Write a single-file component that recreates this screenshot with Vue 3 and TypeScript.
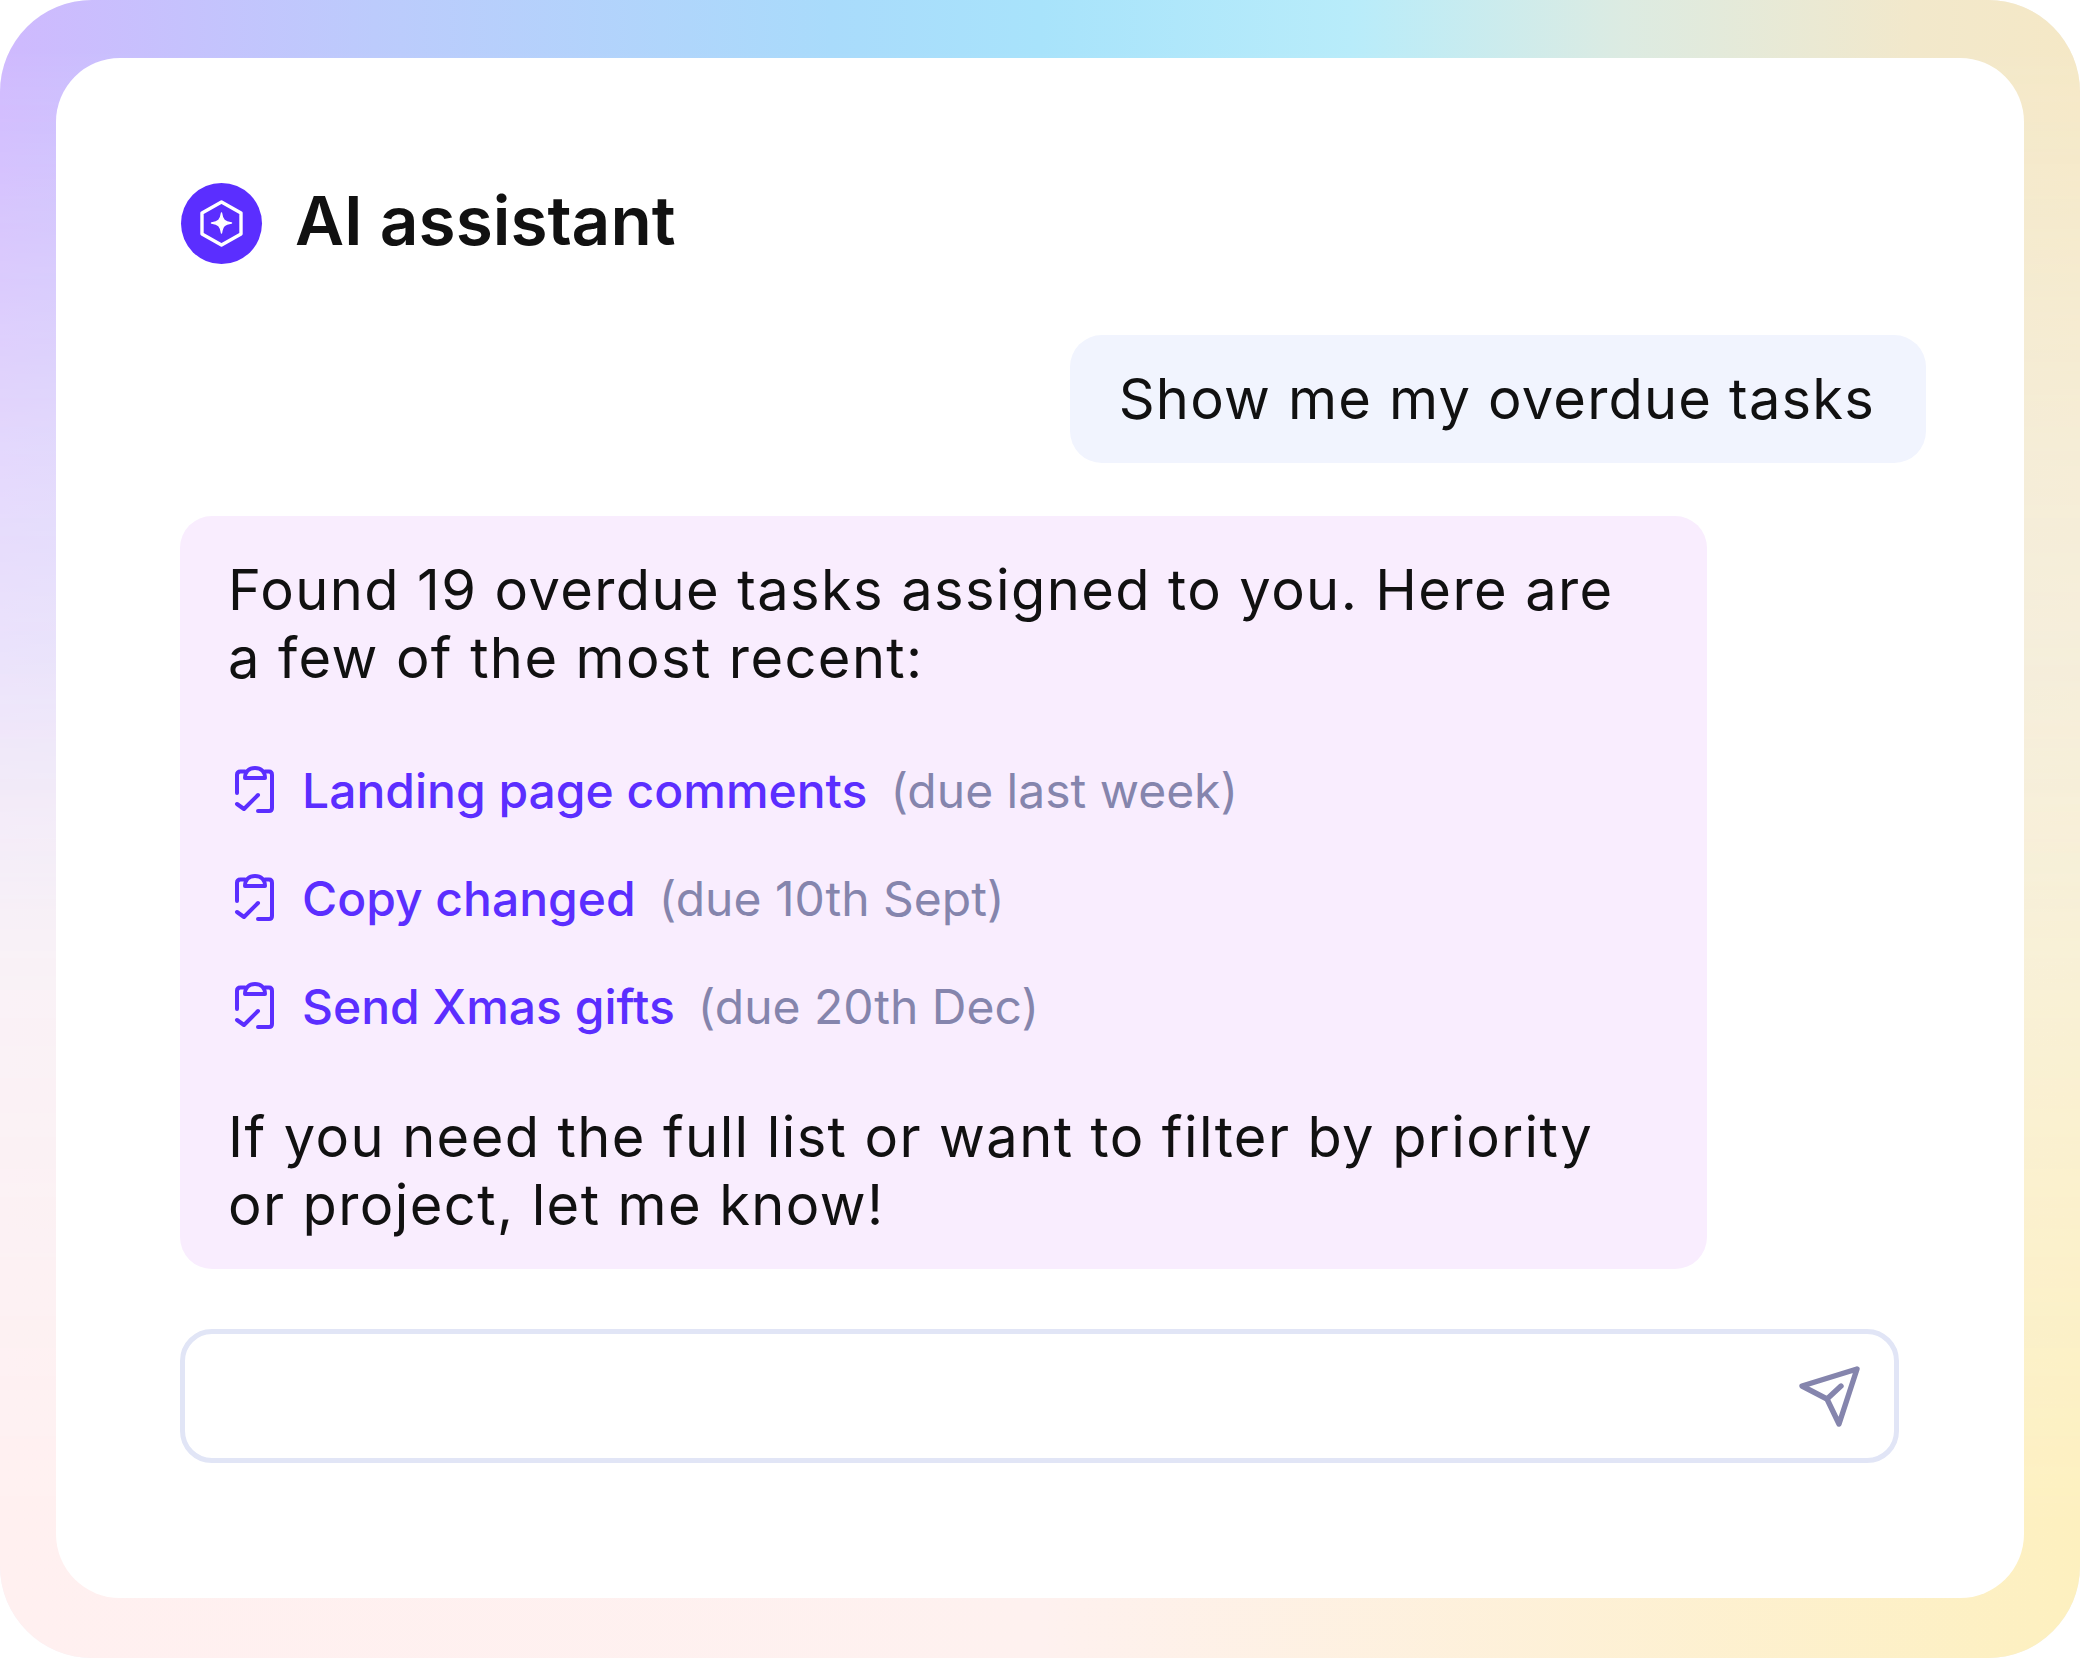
<template>
  <div class="frame">
    <div class="card">
      <header class="head">
        <span class="logo">
          <svg width="81" height="81" viewBox="0 0 81 81" fill="none">
            <path d="M40.5 19 L60 30 V51 L40.5 62 L21 51 V30 Z" stroke="#fff" stroke-width="3.4" stroke-linejoin="round" />
            <path d="M40.5 30 C41.5 37 43.5 39 50.5 40 C43.5 41 41.5 43 40.5 50 C39.5 43 37.5 41 30.5 40 C37.5 39 39.5 37 40.5 30 Z" fill="#fff" stroke="#fff" stroke-width="1.4" stroke-linejoin="round" />
          </svg>
        </span>
        <h1 class="title">AI assistant</h1>
      </header>

      <div class="user-row">
        <div class="user-bubble">Show me my overdue tasks</div>
      </div>

      <div class="reply">
        <p class="para">Found 19 overdue tasks assigned to you. Here are a few of the most recent:</p>
        <ul class="tasks">
          <li v-for="task in tasks" :key="task.name" class="task">
            <svg class="clip" width="46" height="50" viewBox="0 0 46 50" fill="none" stroke="#5b2eff" stroke-width="4" stroke-linecap="round" stroke-linejoin="round">
              <path d="M3 27 V9 Q3 5.5 6.5 5.5 H11 M31 5.5 H35 Q38 5.5 38 9 V42 Q38 45 35 45 H24" />
              <path d="M11 12 H31 C31 6 27 2 21 2 C15 2 11 6 11 12 Z" />
              <path d="M3 38 L10 43 L24 29" />
            </svg>
            <span class="task-name">{{ task.name }}</span>
            <span class="task-due">{{ task.due }}</span>
          </li>
        </ul>
        <p class="para">If you need the full list or want to filter by priority or project, let me know!</p>
      </div>

      <div class="composer">
        <svg width="64" height="64" viewBox="0 0 64 64" fill="none" stroke="#8585ad" stroke-width="5.4" stroke-linecap="round" stroke-linejoin="round">
          <path d="M59 5 L4 22 L29 35 L41 60 Z" />
          <path d="M29 35 L43 22" />
        </svg>
      </div>
    </div>
  </div>
</template>

<script setup lang="ts">
interface Task {
  name: string
  due: string
}

const tasks: Task[] = [
  { name: 'Landing page comments', due: '(due last week)' },
  { name: 'Copy changed', due: '(due 10th Sept)' },
  { name: 'Send Xmas gifts', due: '(due 20th Dec)' },
]
</script>

<style>
html,
body {
  background: #fff;
}
</style>

<style scoped>
.frame {
  position: relative;
  width: 2080px;
  height: 1658px;
  box-sizing: border-box;
  padding: 58px 56px 60px;
  border-radius: 92px;
  overflow: hidden;
  font-family: Inter, "Liberation Sans", sans-serif;
  background: linear-gradient(90deg, #f6f3fb 0%, #f6f3ee 50%, #f6f1e4 100%);
}

/* cool colours fading down from the top edge */
.frame::before {
  content: "";
  position: absolute;
  inset: 0;
  background: linear-gradient(90deg, #cfb9fe 0%, #bccbfc 18%, #a9dbfb 40%, #a8e3fb 50%, #b8ecfa 65%, #dcebe2 78%, #f2e8cb 92%, #f5e8c6 100%);
  -webkit-mask-image: linear-gradient(180deg, #000 0%, #000 3%, rgba(0, 0, 0, 0.45) 28%, transparent 58%);
  mask-image: linear-gradient(180deg, #000 0%, #000 3%, rgba(0, 0, 0, 0.45) 28%, transparent 58%);
}

/* warm colours fading up from the bottom edge */
.frame::after {
  content: "";
  position: absolute;
  inset: 0;
  background: linear-gradient(90deg, #fff0f0 0%, #fef1ef 50%, #fdf0bf 100%);
  -webkit-mask-image: linear-gradient(0deg, #000 0%, #000 8%, transparent 62%);
  mask-image: linear-gradient(0deg, #000 0%, #000 8%, transparent 62%);
}

.card {
  position: relative;
  z-index: 1;
  height: 100%;
  box-sizing: border-box;
  padding: 125px 98px 0 124px;
  background: #fff;
  border-radius: 64px;
}

.head {
  display: flex;
  align-items: flex-start;
  gap: 33px;
  height: 81px;
}

.logo {
  display: flex;
  width: 81px;
  height: 81px;
  margin-left: 1px;
  border-radius: 50%;
  background: #5b2eff;
}

.title {
  margin: 0;
  font-size: 67.5px;
  line-height: 76px;
  font-weight: 600;
  color: #111;
}

.user-row {
  display: flex;
  justify-content: flex-end;
  margin-top: 71px;
}

.user-bubble {
  padding: 30px 51px 30px 49px;
  border-radius: 32px;
  background: #f1f4fe;
  font-size: 56px;
  line-height: 68px;
  letter-spacing: 1.2px;
  color: #111;
}

.reply {
  box-sizing: border-box;
  width: 1527px;
  margin-top: 53px;
  padding: 40px 48px 30px 48px;
  border-radius: 32px;
  background: #f9edfe;
}

.para {
  margin: 0;
  font-size: 56px;
  line-height: 68px;
  letter-spacing: 1.4px;
  color: #111;
}

.tasks {
  display: flex;
  flex-direction: column;
  gap: 40px;
  margin: 65px 0 62px;
  padding: 0;
  list-style: none;
}

.task {
  display: flex;
  align-items: center;
  height: 68px;
  font-size: 48px;
  line-height: 68px;
}

.clip {
  margin-left: 6px;
  margin-right: 22px;
}

.task-name {
  font-weight: 500;
  color: #5b2eff;
}

.task-due {
  margin-left: 23px;
  color: #8585ad;
}

.composer {
  display: flex;
  align-items: center;
  justify-content: flex-end;
  box-sizing: border-box;
  width: 1719px;
  height: 134px;
  margin-top: 60px;
  padding-right: 32px;
  border: 5px solid #e1e5f6;
  border-radius: 32px;
  background: #fff;
}
</style>
